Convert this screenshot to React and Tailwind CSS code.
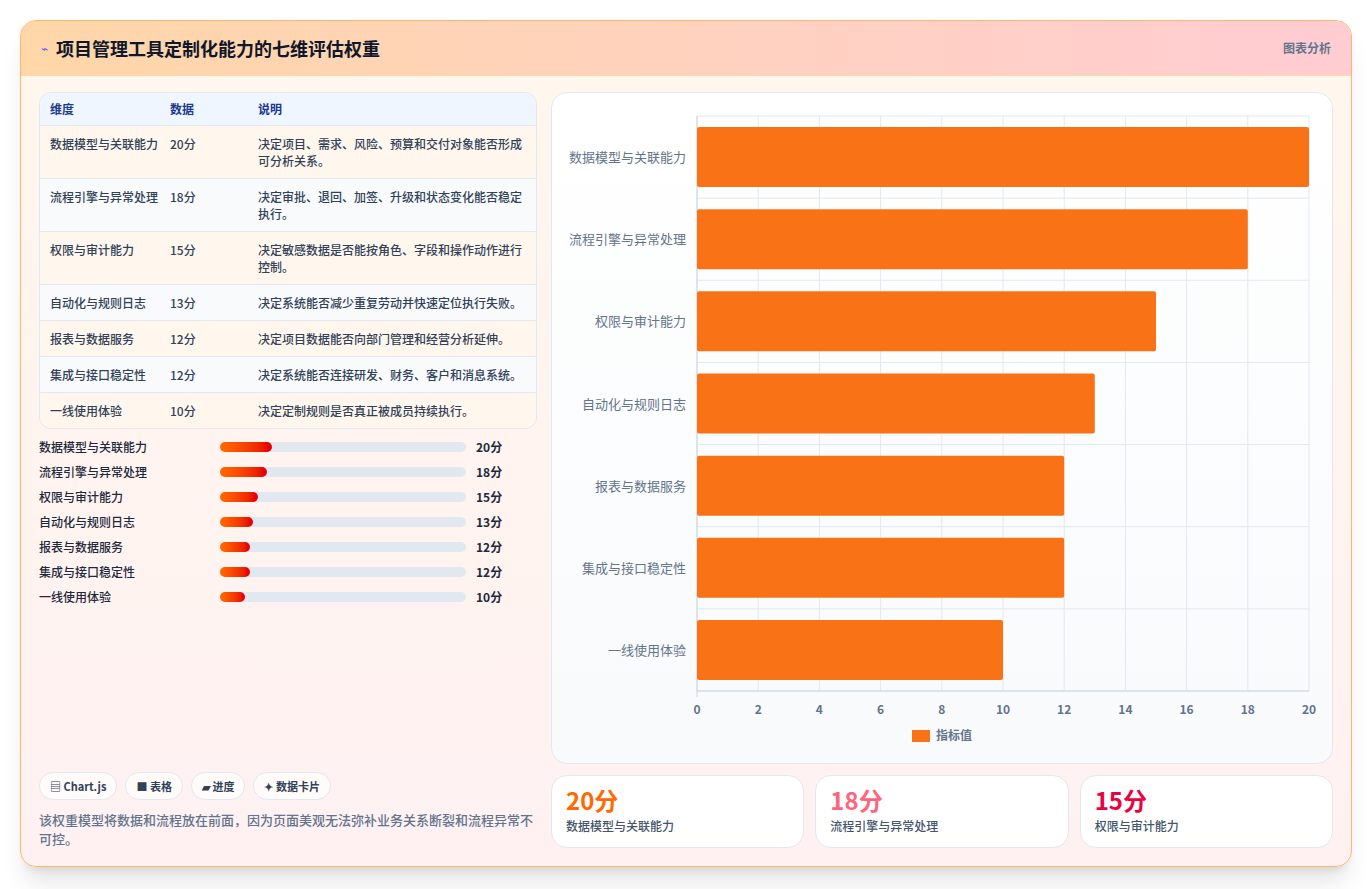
import React from 'react';

const rows = [
  ['数据模型与关联能力', 20, '决定项目、需求、风险、预算和交付对象能否形成可分析关系。'],
  ['流程引擎与异常处理', 18, '决定审批、退回、加签、升级和状态变化能否稳定执行。'],
  ['权限与审计能力', 15, '决定敏感数据是否能按角色、字段和操作动作进行控制。'],
  ['自动化与规则日志', 13, '决定系统能否减少重复劳动并快速定位执行失败。'],
  ['报表与数据服务', 12, '决定项目数据能否向部门管理和经营分析延伸。'],
  ['集成与接口稳定性', 12, '决定系统能否连接研发、财务、客户和消息系统。'],
  ['一线使用体验', 10, '决定定制规则是否真正被成员持续执行。'],
];

const Chart = () => {
  // plot area relative to card (card origin 552,92)
  const x0 = 145, x1 = 757, y0 = 23, y1 = 598;
  const band = (y1 - y0) / 7;
  return (
    <svg width="780" height="672" className="block">
      {Array.from({ length: 11 }).map((_, i) => {
        const x = x0 + ((x1 - x0) * i) / 10;
        return <line key={i} x1={x} x2={x} y1={y0} y2={y1} stroke="#e2e8f0" />;
      })}
      {Array.from({ length: 8 }).map((_, i) => (
        <line key={i} x1={x0} x2={x1} y1={y0 + band * i} y2={y0 + band * i} stroke="#e2e8f0" />
      ))}
      <line x1={x0} x2={x0} y1={y0} y2={y1 + 6} stroke="#cbd5e1" />
      <line x1={x0} x2={x1} y1={y1} y2={y1} stroke="#cbd5e1" />
      {rows.map((r, i) => {
        const yc = y0 + band * i + band / 2;
        return (
          <g key={i}>
            <rect x={x0} y={yc - 30} width={((x1 - x0) * r[1]) / 20} height={60} fill="#f97316" rx="2" />
            <text x={x0 - 11} y={yc + 5} textAnchor="end" fontSize="13" fill="#64748b">{r[0]}</text>
          </g>
        );
      })}
      {Array.from({ length: 11 }).map((_, i) => (
        <text key={i} x={x0 + ((x1 - x0) * i) / 10} y={621} textAnchor="middle" fontSize="12" fontWeight="bold" fill="#64748b">{i * 2}</text>
      ))}
      <rect x={360} y={637} width={18} height={12} fill="#f97316" />
      <text x={384} y={647} fontSize="12" fontWeight="bold" fill="#64748b">指标值</text>
    </svg>
  );
};

export default function App() {
  return (
    <div className="w-[1372px] h-[889px] bg-white p-5" style={{ fontFamily: '"Noto Sans CJK SC", "Noto Sans", sans-serif' }}>
      <div className="h-[847px] rounded-2xl border border-orange-300 overflow-hidden bg-gradient-to-b from-orange-50 to-rose-50 shadow-xl flex flex-col">
        <div className="h-[55px] shrink-0 bg-gradient-to-r from-orange-200 to-rose-200 flex items-center justify-between px-5 border-b border-orange-200">
          <div className="flex items-center gap-2">
            <span className="text-indigo-500 text-xs">⌁</span>
            <h1 className="text-lg font-bold text-slate-900">项目管理工具定制化能力的七维评估权重</h1>
          </div>
          <span className="text-xs font-bold text-slate-500">图表分析</span>
        </div>
        <div className="flex-1 flex gap-[14px] px-[18px] pt-4 pb-[18px]">
          <div className="w-[500px] flex flex-col">
            <div className="rounded-xl border border-slate-200 overflow-hidden text-xs text-slate-700">
              <div className="grid grid-cols-[120px_88px_1fr] bg-blue-50 h-[33px] items-center px-[10px] font-bold text-blue-900 border-b border-slate-200">
                <span>维度</span><span>数据</span><span>说明</span>
              </div>
              {rows.map((r, i) => (
                <div key={i} className={`grid grid-cols-[120px_88px_1fr] px-[10px] py-[9px] leading-[17px] border-b border-slate-200 last:border-b-0 font-medium ${i % 2 ? 'bg-slate-50' : 'bg-orange-50'}`}>
                  <span className="pr-3">{r[0]}</span><span>{r[1]}分</span><span>{r[2]}</span>
                </div>
              ))}
            </div>
            <div className="mt-[9px] flex flex-col gap-[7px]">
              {rows.map((r, i) => (
                <div key={i} className="flex items-center h-[18px] text-xs font-medium text-slate-800">
                  <span className="w-[181px]">{r[0]}</span>
                  <div className="w-[246px] h-[10px] rounded-full bg-slate-200">
                    <div className="h-full rounded-full bg-gradient-to-r from-orange-500 to-red-600" style={{ width: `${r[1] / 100 * 246 + (r[1] - 10) * 0.3}px` }} />
                  </div>
                  <span className="ml-[10px] font-bold">{r[1]}分</span>
                </div>
              ))}
            </div>
            <div className="mt-auto">
              <div className="flex gap-2 text-[11px] font-bold text-slate-700">
                {['▤ Chart.js', '■ 表格', '▰ 进度', '✦ 数据卡片'].map(t => (
                  <span key={t} className="px-[10px] h-7 flex items-center rounded-full bg-white/70 border border-slate-200">{t}</span>
                ))}
              </div>
              <p className="mt-[10px] text-[13px] leading-[19px] text-slate-500 font-medium">该权重模型将数据和流程放在前面，因为页面美观无法弥补业务关系断裂和流程异常不可控。</p>
            </div>
          </div>
          <div className="flex-1 flex flex-col gap-[11px]">
            <div className="h-[672px] rounded-2xl border border-slate-200 bg-gradient-to-b from-white to-slate-50 overflow-hidden">
              <Chart />
            </div>
            <div className="flex gap-[11px]">
              {[['20分', 'text-orange-500', rows[0][0]], ['18分', 'text-rose-400', rows[1][0]], ['15分', 'text-rose-600', rows[2][0]]].map(([v, c, l]) => (
                <div key={l} className="flex-1 h-[73px] rounded-2xl border border-slate-200 bg-white px-[14px] py-[10px]">
                  <div className={`text-2xl font-bold leading-7 ${c}`}>{v}</div>
                  <div className="text-xs text-slate-600 mt-1 font-medium">{l}</div>
                </div>
              ))}
            </div>
          </div>
        </div>
      </div>
    </div>
  );
}
